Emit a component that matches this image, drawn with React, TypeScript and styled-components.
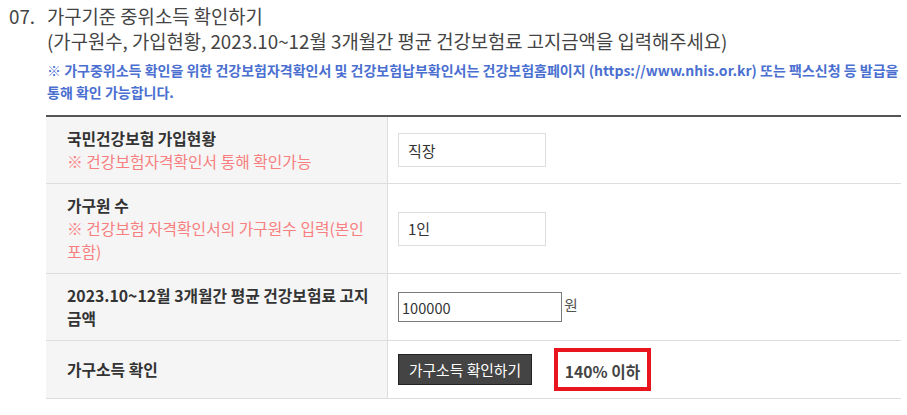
import styled, { createGlobalStyle } from "styled-components";

const GlobalStyle = createGlobalStyle`
  html, body {
    margin: 0;
    padding: 0;
    background: #fff;
  }
  body {
    font-family: "Noto Sans CJK KR", "Noto Sans", sans-serif;
    color: #333;
  }
`;

const Section = styled.section`
  display: flex;
  padding: 3px 0 0 9px;
`;

const Number = styled.div`
  width: 38px;
  flex-shrink: 0;
  font-size: 18.8px;
  line-height: 25px;
  color: #444;
`;

const Body = styled.div`
  width: 855px;
  display: flex;
  flex-direction: column;
`;

const Title = styled.h3`
  margin: 0;
  font-size: 18.8px;
  line-height: 25px;
  font-weight: 400;
  color: #444;
`;

const Notice = styled.p`
  margin: 6px 0 0;
  font-size: 14px;
  line-height: 22px;
  font-weight: 700;
  color: #4a6fd0;
`;

const Table = styled.table`
  margin: 12px 0 0 -1px;
  width: 855px;
  border-collapse: collapse;
  border-top: 2px solid #555;
`;

const Row = styled.tr`
  border-bottom: 1px solid #ddd;
`;

const Label = styled.th`
  width: 310px;
  padding: 10px 10px 10px 21px;
  background: #f5f5f5;
  border-right: 1px solid #ddd;
  text-align: left;
  vertical-align: middle;
  font-size: 15.8px;
  line-height: 23px;
  font-weight: 700;
  color: #333;
`;

const Hint = styled.span`
  display: block;
  font-size: 15.8px;
  font-weight: 400;
  color: #f77f7f;
`;

const Value = styled.td`
  padding: 7px 10px;
  vertical-align: middle;
`;

const ValueRow = styled.div`
  display: flex;
  align-items: center;
`;

const TextBox = styled.input<{ $strong?: boolean; $width: number; $height: number }>`
  box-sizing: border-box;
  width: ${(p) => p.$width}px;
  height: ${(p) => p.$height}px;
  margin: 0;
  padding: 0 ${(p) => (p.$strong ? 3 : 9)}px;
  border: 1px solid ${(p) => (p.$strong ? "#7a7a7a" : "#ddd")};
  background: #fff;
  font-family: inherit;
  font-size: ${(p) => (p.$strong ? 14.6 : 15)}px;
  color: #333;
  outline: none;
`;

const Unit = styled.span`
  margin: 0 0 6px 2px;
  font-size: 15px;
  color: #555;
`;

const DarkButton = styled.button`
  box-sizing: border-box;
  width: 134px;
  height: 31px;
  padding: 0;
  border: 1px solid #222;
  background: #444;
  color: #fff;
  font-family: inherit;
  font-size: 14.8px;
  cursor: pointer;
`;

const ResultBox = styled.div`
  box-sizing: border-box;
  margin-left: 22px;
  width: 97px;
  height: 43px;
  border: 4px solid #e8141e;
  display: flex;
  align-items: center;
  justify-content: center;
  padding-top: 3px;
  font-size: 15.7px;
  font-weight: 700;
  color: #444;
`;

export default function App() {
  return (
    <>
      <GlobalStyle />
      <Section>
        <Number>07.</Number>
        <Body>
          <Title>
            가구기준 중위소득 확인하기
            <br />
            (가구원수, 가입현황, 2023.10~12월 3개월간 평균 건강보험료 고지금액을 입력해주세요)
          </Title>
          <Notice>
            ※ 가구중위소득 확인을 위한 건강보험자격확인서 및 건강보험납부확인서는 건강보험홈페이지
            (https://www.nhis.or.kr) 또는 팩스신청 등 발급을 통해 확인 가능합니다.
          </Notice>
          <Table>
            <tbody>
              <Row>
                <Label>
                  국민건강보험 가입현황
                  <Hint>※ 건강보험자격확인서 통해 확인가능</Hint>
                </Label>
                <Value>
                  <TextBox $width={148} $height={34} defaultValue="직장" readOnly />
                </Value>
              </Row>
              <Row>
                <Label>
                  가구원 수
                  <Hint>※ 건강보험 자격확인서의 가구원수 입력(본인 포함)</Hint>
                </Label>
                <Value>
                  <TextBox $width={148} $height={34} defaultValue="1인" readOnly />
                </Value>
              </Row>
              <Row>
                <Label>2023.10~12월 3개월간 평균 건강보험료 고지 금액</Label>
                <Value>
                  <ValueRow>
                    <TextBox $strong $width={164} $height={30} defaultValue="100000" />
                    <Unit>원</Unit>
                  </ValueRow>
                </Value>
              </Row>
              <Row>
                <Label>가구소득 확인</Label>
                <Value>
                  <ValueRow>
                    <DarkButton>가구소득 확인하기</DarkButton>
                    <ResultBox>140% 이하</ResultBox>
                  </ValueRow>
                </Value>
              </Row>
            </tbody>
          </Table>
        </Body>
      </Section>
    </>
  );
}
